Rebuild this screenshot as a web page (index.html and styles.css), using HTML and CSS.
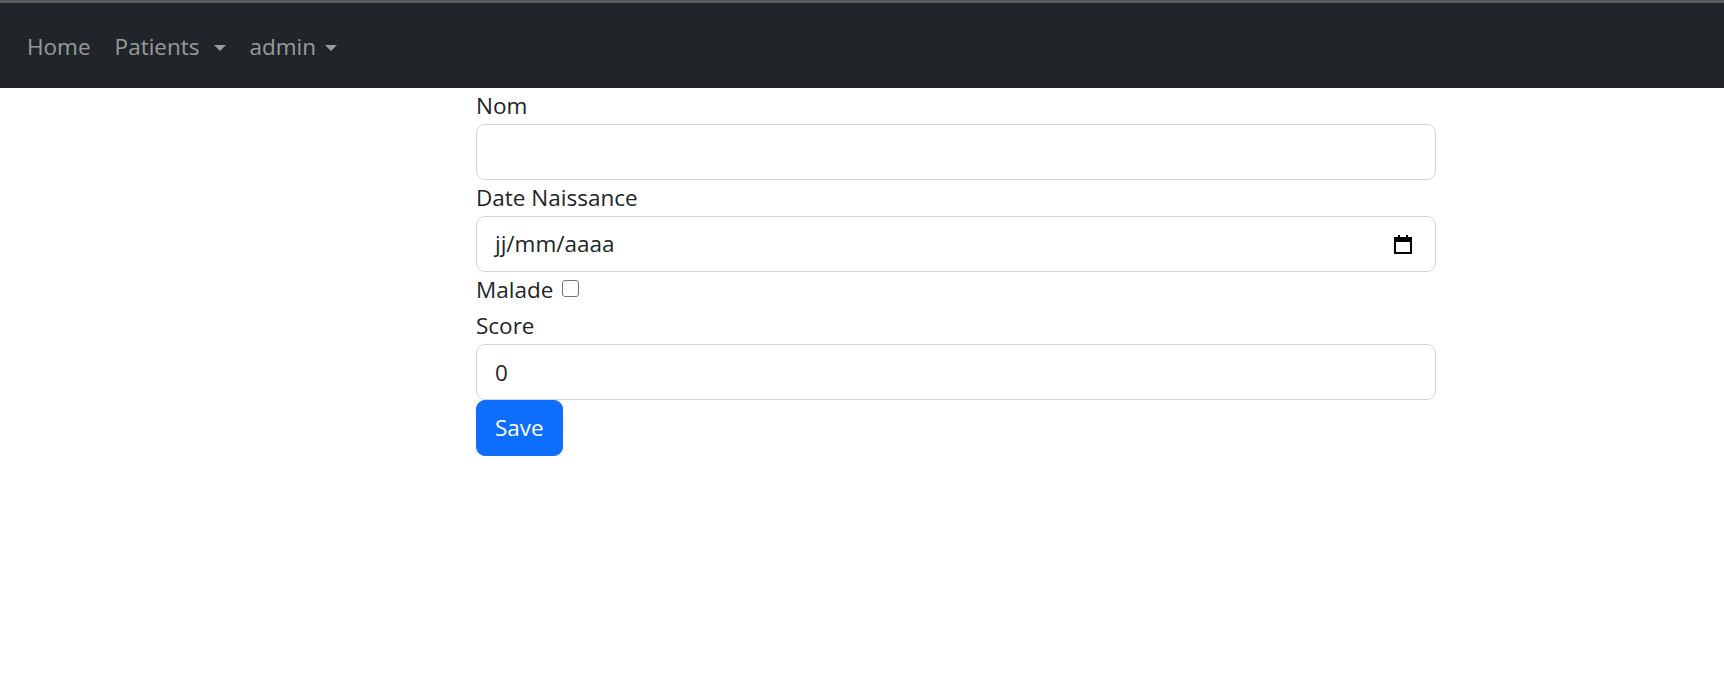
FILE: index.html
```html
<!DOCTYPE html>
<html lang="fr">
<head>
<meta charset="utf-8">
<title>Patients</title>
<link rel="stylesheet" href="styles.css">
</head>
<body>
<nav class="navbar">
  <ul class="nav">
    <li><a class="nav-link" href="#">Home</a></li>
    <li><a class="nav-link dropdown wide" href="#">Patients<span class="caret"></span></a></li>
    <li><a class="nav-link dropdown" href="#">admin<span class="caret"></span></a></li>
  </ul>
</nav>
<main class="main">
  <form class="form">
    <label class="form-label" for="nom">Nom</label>
    <input class="form-control" id="nom" type="text">
    <label class="form-label" for="date">Date Naissance</label>
    <div class="form-control date-control" id="date">
      <span>jj/mm/aaaa</span>
      <svg class="cal-icon" width="20" height="20" viewBox="0 0 20 20" aria-hidden="true">
        <rect x="2" y="4" width="16" height="15" fill="none" stroke="#000" stroke-width="2"/>
        <rect x="2" y="3" width="16" height="5" fill="#000"/>
        <rect x="5" y="1" width="2" height="3" fill="#000"/>
        <rect x="13" y="1" width="2" height="3" fill="#000"/>
      </svg>
    </div>
    <div class="check-row">
      <label for="malade">Malade</label><input class="check" id="malade" type="checkbox">
    </div>
    <label class="form-label" for="score">Score</label>
    <input class="form-control" id="score" type="number" value="0">
    <button class="btn" type="button">Save</button>
  </form>
</main>
</body>
</html>
```

FILE: styles.css
```css
* { box-sizing: border-box; }
html, body { margin: 0; padding: 0; }
body {
  font-family: "Open Sans", "Noto Sans", sans-serif;
  font-size: 22.5px;
  line-height: 36px;
  color: #212529;
  background: #fff;
}
.navbar {
  background: #212529;
  border-top: 3px solid #58595b;
  height: 88px;
  display: flex;
  align-items: center;
  padding-left: 15px;
  padding-top: 3px;
}
.nav {
  list-style: none;
  margin: 0;
  padding: 0;
  display: flex;
  align-items: center;
}
.nav-link {
  display: flex;
  align-items: center;
  padding: 12px 12px;
  color: rgba(255,255,255,.55);
  text-decoration: none;
  font-size: 22.5px;
  line-height: 36px;
}
.caret {
  display: inline-block;
  width: 0;
  height: 0;
  margin-left: 9px;
  border-top: 6px solid rgba(255,255,255,.55);
  border-left: 6.5px solid transparent;
  border-right: 6.5px solid transparent;
  margin-top: 2px;
}
.wide .caret { margin-left: 14px; }
.main {
  padding-left: 476px;
}
.form {
  width: 960px;
  display: flex;
  flex-direction: column;
  align-items: flex-start;
}
.form-label {
  display: block;
  height: 36px;
}
.form-control {
  display: block;
  width: 100%;
  height: 56px;
  padding: 9px 18px;
  font-family: inherit;
  font-size: 22.5px;
  line-height: 36px;
  color: #212529;
  background: #fff;
  border: 1px solid #ced4da;
  border-radius: 9px;
  outline: none;
  -moz-appearance: textfield;
}
.form-control::-webkit-outer-spin-button,
.form-control::-webkit-inner-spin-button { -webkit-appearance: none; margin: 0; }
.date-control {
  display: flex;
  align-items: center;
  justify-content: space-between;
  padding-right: 22px;
}
.cal-icon { display: block; }
.check-row {
  height: 36px;
  display: flex;
  align-items: center;
}
.check {
  -webkit-appearance: none;
  appearance: none;
  width: 17px;
  height: 17px;
  margin: 0 0 4px 9px;
  border: 1px solid #767676;
  border-radius: 3px;
  background: #fff;
}
.btn {
  height: 56px;
  padding: 9px 18px;
  font-family: inherit;
  font-size: 22.5px;
  line-height: 36px;
  color: #fff;
  background: #0d6efd;
  border: 1px solid #0d6efd;
  border-radius: 9px;
  cursor: pointer;
}
```
